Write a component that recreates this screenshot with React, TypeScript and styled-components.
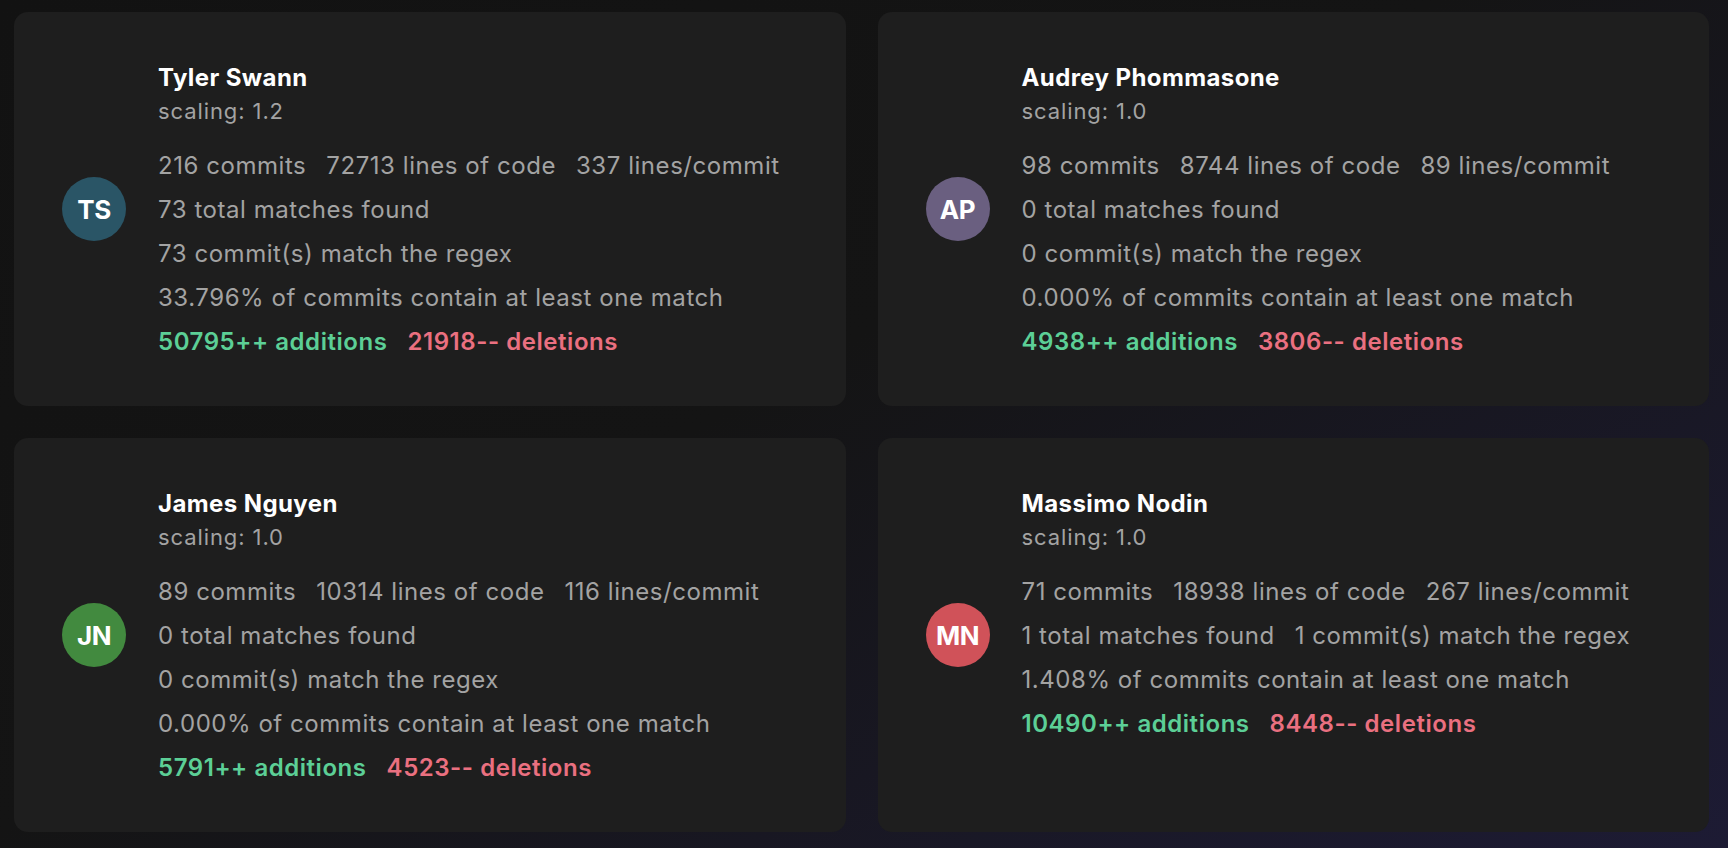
import React from "react";
import styled, { createGlobalStyle } from "styled-components";

const GlobalStyle = createGlobalStyle`
  html, body {
    margin: 0;
    padding: 0;
  }
  body {
    min-height: 100vh;
    background: linear-gradient(150deg, #121212 0%, #141414 45%, #1d1b34 100%);
    font-family: Inter, "Noto Sans", sans-serif;
  }
`;

interface Contributor {
  name: string;
  initials: string;
  color: string;
  scaling: string;
  // each inner array is one printed line of the stats block
  lines: string[][];
  additions: number;
  deletions: number;
}

const contributors: Contributor[] = [
  {
    name: "Tyler Swann",
    initials: "TS",
    color: "#2a5566",
    scaling: "1.2",
    lines: [
      ["216 commits", "72713 lines of code", "337 lines/commit"],
      ["73 total matches found"],
      ["73 commit(s) match the regex"],
      ["33.796% of commits contain at least one match"],
    ],
    additions: 50795,
    deletions: 21918,
  },
  {
    name: "Audrey Phommasone",
    initials: "AP",
    color: "#6a5f80",
    scaling: "1.0",
    lines: [
      ["98 commits", "8744 lines of code", "89 lines/commit"],
      ["0 total matches found"],
      ["0 commit(s) match the regex"],
      ["0.000% of commits contain at least one match"],
    ],
    additions: 4938,
    deletions: 3806,
  },
  {
    name: "James Nguyen",
    initials: "JN",
    color: "#428a3f",
    scaling: "1.0",
    lines: [
      ["89 commits", "10314 lines of code", "116 lines/commit"],
      ["0 total matches found"],
      ["0 commit(s) match the regex"],
      ["0.000% of commits contain at least one match"],
    ],
    additions: 5791,
    deletions: 4523,
  },
  {
    name: "Massimo Nodin",
    initials: "MN",
    color: "#d05259",
    scaling: "1.0",
    lines: [
      ["71 commits", "18938 lines of code", "267 lines/commit"],
      ["1 total matches found", "1 commit(s) match the regex"],
      ["1.408% of commits contain at least one match"],
    ],
    additions: 10490,
    deletions: 8448,
  },
];

const Grid = styled.main`
  display: grid;
  grid-template-columns: repeat(2, 1fr);
  gap: 32px;
  padding: 12px 19px 12px 14px;
`;

const Card = styled.section`
  display: flex;
  align-items: flex-start;
  gap: 32px;
  padding: 48px;
  border-radius: 14px;
  background: #1e1e1e;
`;

const Avatar = styled.div<{ $color: string }>`
  flex: none;
  align-self: center;
  width: 64px;
  height: 64px;
  border-radius: 50%;
  background: ${(p) => p.$color};
  color: #fff;
  display: flex;
  align-items: center;
  justify-content: center;
  font-size: 26px;
  font-weight: 700;
  letter-spacing: -0.5px;
`;

const Info = styled.div`
  flex: 1;
  min-width: 0;
`;

const Name = styled.h2`
  margin: 0;
  font-size: 24px;
  line-height: 36px;
  font-weight: 700;
  letter-spacing: 0.4px;
  color: #ffffff;
`;

const Scaling = styled.div`
  font-size: 22px;
  line-height: 30px;
  letter-spacing: 0.9px;
  color: #a3a3a3;
  margin-bottom: 24px;
`;

const Stats = styled.div`
  display: flex;
  flex-direction: column;
  row-gap: 12px;
`;

const Line = styled.div`
  display: flex;
  column-gap: 20px;
  white-space: nowrap;
`;

const Stat = styled.span<{ $tone?: "add" | "del" }>`
  font-size: 24px;
  line-height: 32px;
  letter-spacing: 0.55px;
  color: ${(p) =>
    p.$tone === "add" ? "#5ccf96" : p.$tone === "del" ? "#ea7080" : "#a3a3a3"};
  font-weight: ${(p) => (p.$tone ? 600 : 400)};
`;

const ContributorCard: React.FC<{ c: Contributor }> = ({ c }) => (
  <Card>
    <Avatar $color={c.color}>{c.initials}</Avatar>
    <Info>
      <Name>{c.name}</Name>
      <Scaling>scaling: {c.scaling}</Scaling>
      <Stats>
        {c.lines.map((line, i) => (
          <Line key={i}>
            {line.map((s) => (
              <Stat key={s}>{s}</Stat>
            ))}
          </Line>
        ))}
        <Line>
          <Stat $tone="add">{c.additions}++ additions</Stat>
          <Stat $tone="del">{c.deletions}-- deletions</Stat>
        </Line>
      </Stats>
    </Info>
  </Card>
);

export default function App() {
  return (
    <>
      <GlobalStyle />
      <Grid>
        {contributors.map((c) => (
          <ContributorCard key={c.name} c={c} />
        ))}
      </Grid>
    </>
  );
}
